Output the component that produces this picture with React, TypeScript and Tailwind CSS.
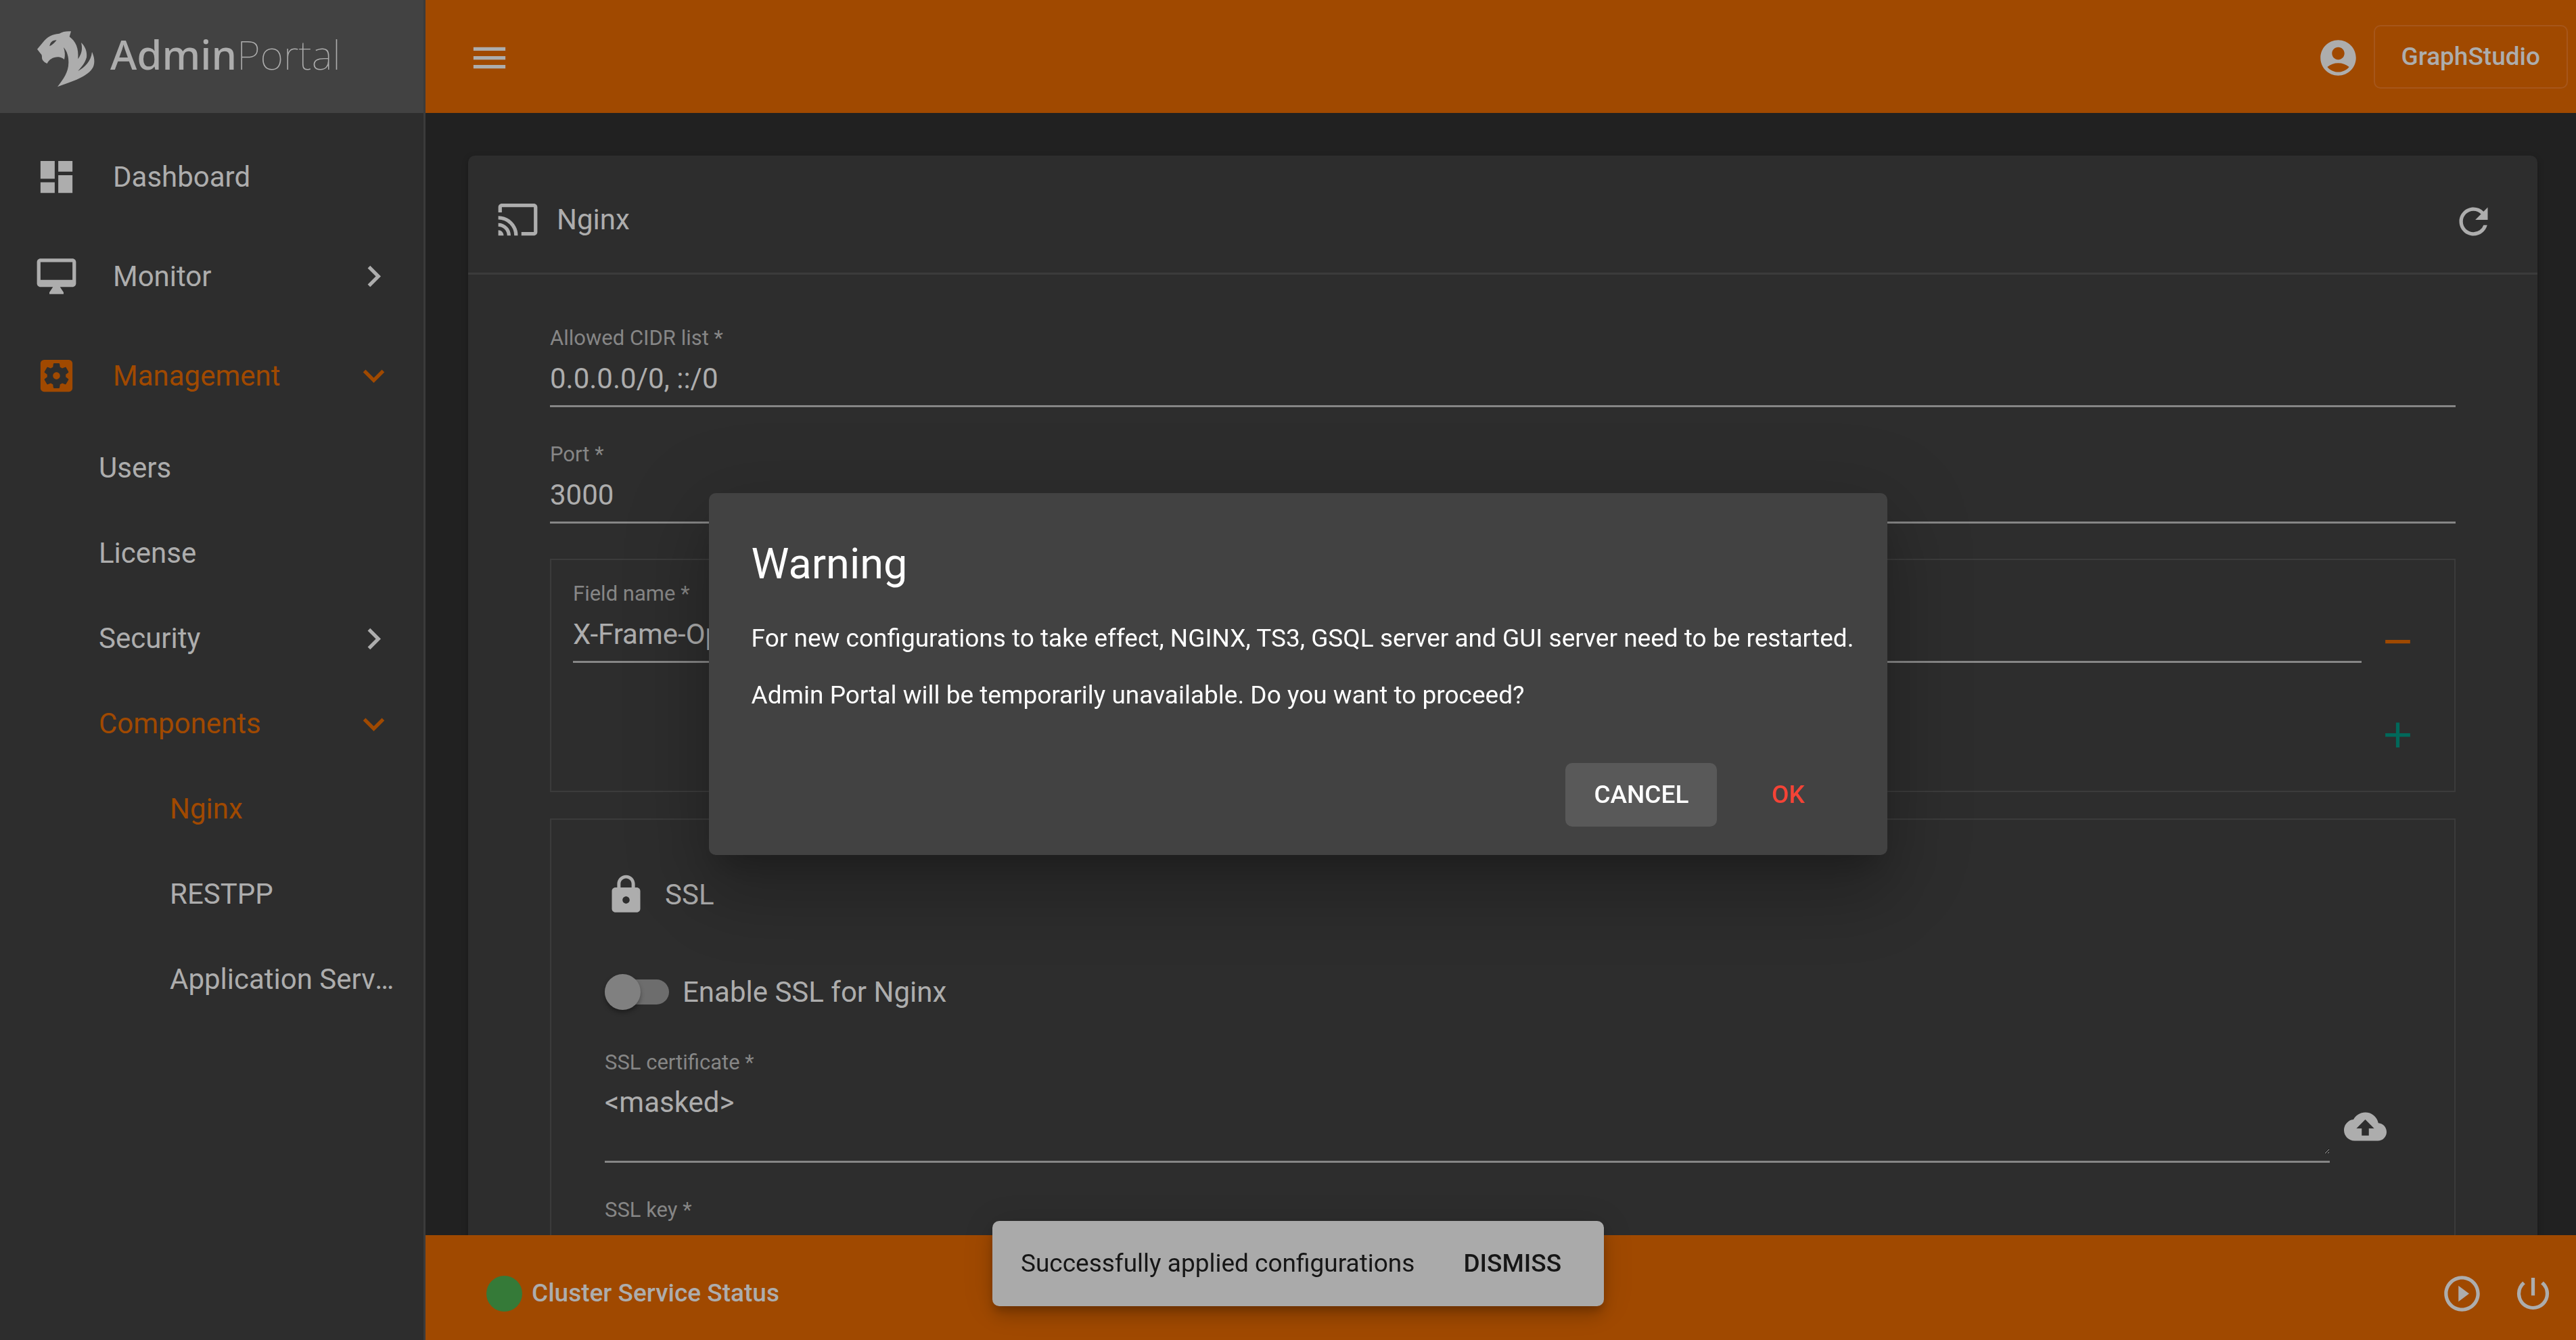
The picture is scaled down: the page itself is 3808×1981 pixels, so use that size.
import type { ReactNode } from "react";
import type { IconType } from "react-icons";
import {
  MdAccountCircle,
  MdAdd,
  MdCast,
  MdChevronRight,
  MdCloudUpload,
  MdDashboard,
  MdExpandMore,
  MdLock,
  MdMenu,
  MdOutlineDesktopMac,
  MdPlayCircleOutline,
  MdPowerSettingsNew,
  MdRefresh,
  MdRemove,
  MdSettingsApplications,
} from "react-icons/md";

const ICON = "size-[63px] shrink-0";

function Logo() {
  return (
    <div className="flex h-[167px] items-center bg-[#424242] pl-[40px] text-[#adadad]">
      <svg viewBox="0 0 390 360" className="h-[120px] w-[130px] shrink-0" aria-hidden="true">
        <path
          fill="currentColor"
          fillRule="evenodd"
          d="M45 146 L70 116 C88 92 112 79 143 77 C158 68 176 65 195 67 L188 91 C216 111 230 142 226 190 C243 165 247 145 240 117 C259 135 267 158 264 182 C257 208 241 225 226 243 C256 226 284 200 288 158 C299 182 302 205 293 226 C271 268 202 289 135 313 C160 280 184 250 184 205 C184 180 178 155 162 138 C168 155 170 175 165 192 C158 186 150 182 140 181 C115 180 98 192 89 210 C75 203 66 195 66 183 C66 175 65 170 60 166 Z M100 133 C102 118 110 106 131 106 C124 116 113 127 100 133 Z"
        />
      </svg>
      <div className="-ml-[7px] pb-[8px] font-['Noto_Sans',sans-serif] text-[60px] leading-[72px]">
        <span className="font-medium">Admin</span>
        <span className="font-thin">Portal</span>
      </div>
    </div>
  );
}

type NavProps = {
  label: string;
  level: 0 | 1 | 2;
  icon?: IconType;
  active?: boolean;
  caret?: "right" | "down";
};

const LEVEL_CLASS = {
  0: "h-[147px] pl-[52px]",
  1: "h-[126px] pl-[146px]",
  2: "h-[126px] pl-[251px]",
};

function NavItem({ label, level, icon: Icon, active, caret }: NavProps) {
  return (
    <li>
      <a
        href="#"
        className={`flex items-center pr-[42px] ${LEVEL_CLASS[level]} ${active ? "text-[#a04900]" : "text-[#adadad]"}`}
      >
        {Icon && <Icon className={`${ICON} mr-[52px]`} />}
        <span className="min-w-0 flex-1 truncate">{label}</span>
        {caret === "right" && <MdChevronRight className={ICON} />}
        {caret === "down" && <MdExpandMore className={ICON} />}
      </a>
    </li>
  );
}

const NAV: NavProps[] = [
  { label: "Dashboard", level: 0, icon: MdDashboard },
  { label: "Monitor", level: 0, icon: MdOutlineDesktopMac, caret: "right" },
  { label: "Management", level: 0, icon: MdSettingsApplications, caret: "down", active: true },
  { label: "Users", level: 1 },
  { label: "License", level: 1 },
  { label: "Security", level: 1, caret: "right" },
  { label: "Components", level: 1, caret: "down", active: true },
  { label: "Nginx", level: 2, active: true },
  { label: "RESTPP", level: 2 },
  { label: "Application Server", level: 2 },
];

function Label({ id, children }: { id: string; children: ReactNode }) {
  return (
    <label htmlFor={id} className="mb-[17px] block text-[31px] leading-[36px] text-[#868686]">
      {children} *
    </label>
  );
}

function TextField({ id, label, value }: { id: string; label: string; value: string }) {
  return (
    <div className="min-w-0 flex-1">
      <Label id={id}>{label}</Label>
      <input
        id={id}
        type="text"
        defaultValue={value}
        className="block h-[67px] w-full border-b-3 border-[#868686] bg-transparent pb-[16px] leading-[48px] text-[#adadad] outline-none"
      />
    </div>
  );
}

function UploadField({ id, label, value }: { id: string; label: string; value: string }) {
  return (
    <div className="flex items-end gap-[21px]">
      <div className="min-w-0 flex-1">
        <Label id={id}>{label}</Label>
        <div className="border-b-3 border-[#868686] pb-[10px]">
          <textarea
            id={id}
            defaultValue={value}
            className="block h-[100px] w-full resize-y overflow-hidden bg-transparent leading-[48px] text-[#adadad] outline-none"
          />
        </div>
      </div>
      <button type="button" aria-label={`Upload ${label}`} className="mb-[22px]">
        <MdCloudUpload className={ICON} />
      </button>
    </div>
  );
}

function NginxCard() {
  return (
    <section className="mr-[57px] ml-[63px] rounded-[10px] bg-[#2d2d2d] shadow-[0_3px_10px_rgba(0,0,0,0.25)]">
      <header className="flex h-[176px] items-center justify-between border-b-3 border-[#3b3b3b] pt-[16px] pr-[63px] pl-[42px]">
        <h1 className="flex items-center gap-[26px]">
          <MdCast className={ICON} />
          Nginx
        </h1>
        <button type="button" aria-label="Refresh" className="pt-[5px]">
          <MdRefresh className={ICON} />
        </button>
      </header>
      <form className="px-[121px] pt-[76px] pb-[63px]">
        <div className="flex flex-col gap-[52px]">
          <TextField id="cidr" label="Allowed CIDR list" value="0.0.0.0/0, ::/0" />
          <TextField id="port" label="Port" value="3000" />
          <div className="border-2 border-[#3b3b3b] pt-[32px] pr-[52px] pb-[51px] pl-[32px]">
            <div className="flex items-end gap-[22px]">
              <TextField id="header-field" label="Field name" value="X-Frame-Options" />
              <button type="button" aria-label="Remove field" className="text-[#a04900]">
                <MdRemove className={ICON} />
              </button>
            </div>
            <div className="mt-[75px] flex justify-end">
              <button type="button" aria-label="Add field" className="text-[#00685a]">
                <MdAdd className={ICON} />
              </button>
            </div>
          </div>
        </div>
        <div className="mt-[39px] border-2 border-[#3b3b3b] pt-[79px] pr-[100px] pb-[79px] pl-[79px]">
          <h2 className="flex items-center gap-[26px]">
            <MdLock className={ICON} />
            SSL
          </h2>
          <label className="mt-[86px] flex h-[53px] w-fit items-center gap-[20px]">
            <input type="checkbox" role="switch" className="peer sr-only" />
            <span className="flex h-[37px] w-[95px] items-center rounded-full bg-[#6d6d6d]">
              <span className="size-[53px] rounded-full bg-[#808080] shadow-[0_4px_6px_rgba(0,0,0,0.35)]" />
            </span>
            Enable SSL for Nginx
          </label>
          <div className="mt-[60px] flex flex-col gap-[52px]">
            <UploadField id="ssl-cert" label="SSL certificate" value="<masked>" />
            <UploadField id="ssl-key" label="SSL key" value="<masked>" />
          </div>
        </div>
      </form>
    </section>
  );
}

function WarningDialog() {
  return (
    <div className="pointer-events-none fixed inset-0 flex items-center justify-center pt-[12px] pl-[30px]">
      <div
        role="dialog"
        aria-labelledby="warning-title"
        className="pointer-events-auto rounded-[10px] bg-[#424242] pt-[63px] pr-[50px] pb-[42px] pl-[63px] text-[37px] leading-[52px] text-white shadow-[0_29px_39px_-18px_rgba(0,0,0,0.2),0_63px_100px_8px_rgba(0,0,0,0.14),0_24px_121px_21px_rgba(0,0,0,0.12)]"
      >
        <h2 id="warning-title" className="text-[63px] leading-[84px]">
          Warning
        </h2>
        <p className="mt-[42px]">
          For new configurations to take effect, NGINX, TS3, GSQL server and GUI server need to be restarted.
        </p>
        <p className="mt-[32px]">Admin Portal will be temporarily unavailable. Do you want to proceed?</p>
        <div className="mt-[74px] flex justify-end gap-[21px] pr-[13px] font-medium">
          <button type="button" className="h-[94px] rounded-[10px] bg-[#595959] px-[42px]">
            CANCEL
          </button>
          <button type="button" className="h-[94px] min-w-[168px] rounded-[10px] px-[42px] text-[#f44336]">
            OK
          </button>
        </div>
      </div>
    </div>
  );
}

function Snackbar() {
  return (
    <div className="pointer-events-none fixed inset-x-0 bottom-[50px] flex justify-center pl-[30px]">
      <div
        role="status"
        className="pointer-events-auto flex h-[126px] items-center gap-[72px] rounded-[10px] bg-[#aaaaaa] pr-[63px] pl-[42px] text-[37px] text-[#161616] shadow-[0_8px_13px_-3px_rgba(0,0,0,0.2),0_16px_26px_0_rgba(0,0,0,0.14),0_3px_47px_0_rgba(0,0,0,0.12)]"
      >
        Successfully applied configurations
        <button type="button" className="font-medium">
          DISMISS
        </button>
      </div>
    </div>
  );
}

export default function App() {
  return (
    <div className="flex h-screen overflow-hidden bg-[#212121] font-['Roboto',sans-serif] text-[42px] leading-[48px] text-[#adadad]">
      <aside className="w-[629px] shrink-0 border-r-3 border-[#3b3b3b] bg-[#2d2d2d]">
        <Logo />
        <nav className="pt-[21px]">
          <ul>
            {NAV.map((item) => (
              <NavItem key={item.label} {...item} />
            ))}
          </ul>
        </nav>
      </aside>
      <div className="flex min-w-0 flex-1 flex-col">
        <header className="flex h-[167px] shrink-0 items-center justify-between bg-[#a04900] pr-[12px] pl-[63px]">
          <button type="button" aria-label="Toggle menu" className="pt-[4px]">
            <MdMenu className={ICON} />
          </button>
          <div className="flex items-center gap-[21px]">
            <button type="button" aria-label="Account" className="pt-[4px]">
              <MdAccountCircle className={ICON} />
            </button>
            <a
              href="#"
              className="flex h-[94px] items-center rounded-[10px] border-2 border-[#a6561a] px-[39px] text-[37px] font-medium"
            >
              GraphStudio
            </a>
          </div>
        </header>
        <main className="min-h-0 flex-1 overflow-hidden pt-[63px]">
          <NginxCard />
        </main>
        <footer className="flex h-[155px] shrink-0 items-center justify-between bg-[#a04900] pt-[17px] pr-[32px] pl-[90px]">
          <div className="flex items-center gap-[14px] text-[37px] font-medium">
            <span className="size-[53px] rounded-full bg-[#357a38]" />
            Cluster Service Status
          </div>
          <div className="flex gap-[42px]">
            <button type="button" aria-label="Start services">
              <MdPlayCircleOutline className={ICON} />
            </button>
            <button type="button" aria-label="Stop services">
              <MdPowerSettingsNew className={ICON} />
            </button>
          </div>
        </footer>
      </div>
      <WarningDialog />
      <Snackbar />
    </div>
  );
}
